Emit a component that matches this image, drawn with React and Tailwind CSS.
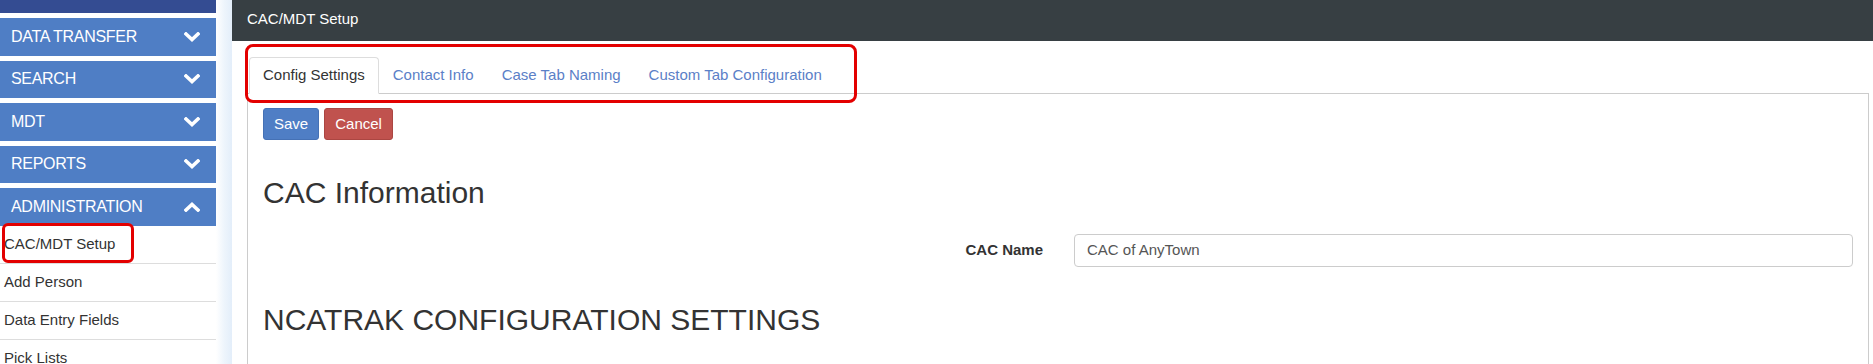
import React from 'react';

const font = { fontFamily: '"Liberation Sans", Arial, sans-serif' };

const Chevron = ({ up }) => (
  <svg width="16" height="10" viewBox="0 0 16 10" className="shrink-0">
    <polyline
      points={up ? '2,8 8,2.5 14,8' : '2,2 8,7.5 14,2'}
      fill="none"
      stroke="white"
      strokeWidth="3.6"
      strokeLinecap="square"
    />
  </svg>
);

const SectionButton = ({ label, up }) => (
  <div className="h-[37.5px] mt-[5px] bg-[#4f7ec5] flex items-center justify-between pl-[11px] pr-[16px] text-white text-[16px] tracking-[-0.3px]">
    <span>{label}</span>
    <Chevron up={up} />
  </div>
);

const SideLink = ({ label }) => (
  <div className="h-[38px] border-b border-[#dddddd] flex items-center pl-[4px] text-[15px] text-[#333333] bg-white">
    {label}
  </div>
);

const Sidebar = () => (
  <aside className="w-[216px] shrink-0 relative bg-white">
    <div className="h-[13px] bg-[#344c92]" />
    <SectionButton label="DATA TRANSFER" />
    <SectionButton label="SEARCH" />
    <SectionButton label="MDT" />
    <SectionButton label="REPORTS" />
    <SectionButton label="ADMINISTRATION" up />
    <SideLink label="CAC/MDT Setup" />
    <SideLink label="Add Person" />
    <SideLink label="Data Entry Fields" />
    <SideLink label="Pick Lists" />
    {/* highlight annotation */}
    <div className="absolute left-[2px] top-[223px] w-[132px] h-[40px] border-[3px] border-[#e30000] rounded-[6px]" />
  </aside>
);

const tabs = ['Config Settings', 'Contact Info', 'Case Tab Naming', 'Custom Tab Configuration'];

export default function App() {
  return (
    <div className="h-[364px] overflow-hidden flex bg-white" style={font}>
      <Sidebar />
      <div className="w-[16px] shrink-0 bg-linear-to-r from-white via-[#eef5fc] to-[#e3eefa]" />

      <main className="flex-1 relative">
        <div className="h-[41px] bg-[#373f43] flex items-center pl-[15px] pb-[2px] text-white text-[15px]">
          CAC/MDT Setup
        </div>

        <div className="pl-[15px] pr-[4px]">
          {/* tabs */}
          <ul className="flex mt-[16px] pl-[2px] relative z-10">
            {tabs.map((t, i) => (
              <li
                key={t}
                className={
                  i === 0
                    ? 'px-[13px] pt-[6px] pb-[8px] leading-[21px] text-[15px] text-[#333333] bg-white border border-[#dddddd] border-b-white rounded-t-[4px] -mb-px'
                    : 'px-[13px] pt-[6px] pb-[8px] leading-[21px] text-[15px] text-[#5b80c7] border border-transparent -mb-px'
                }
              >
                {t}
              </li>
            ))}
          </ul>

          {/* panel */}
          <section className="border border-[#cccccc] px-[15px] pt-[14px] h-[400px]">
            <div className="flex gap-[5px]">
              <button className="h-[32px] px-[10px] bg-[#4f7ec5] border border-[#4571b5] rounded-[3px] text-white text-[15px]">
                Save
              </button>
              <button className="h-[32px] px-[10px] bg-[#c0524e] border border-[#ab4642] rounded-[3px] text-white text-[15px]">
                Cancel
              </button>
            </div>

            <h2 className="mt-[36px] text-[30px] leading-[33px] text-[#333333]">CAC Information</h2>

            <div className="mt-[25px] flex items-center">
              <label className="w-[780px] text-right font-bold text-[15px] text-[#333333]">CAC Name</label>
              <div className="ml-[31px] flex-1 h-[33px] border border-[#cccccc] rounded-[4px] flex items-center pl-[12px] text-[15px] text-[#555555]">
                CAC of AnyTown
              </div>
            </div>

            <h2 className="mt-[36px] text-[30px] leading-[33px] text-[#333333]">
              NCATRAK CONFIGURATION SETTINGS
            </h2>
          </section>
        </div>

        {/* tabs highlight annotation */}
        <div className="absolute left-[13px] top-[44px] w-[612px] h-[59px] border-[3px] border-[#e30000] rounded-[8px] z-20" />
      </main>
    </div>
  );
}
